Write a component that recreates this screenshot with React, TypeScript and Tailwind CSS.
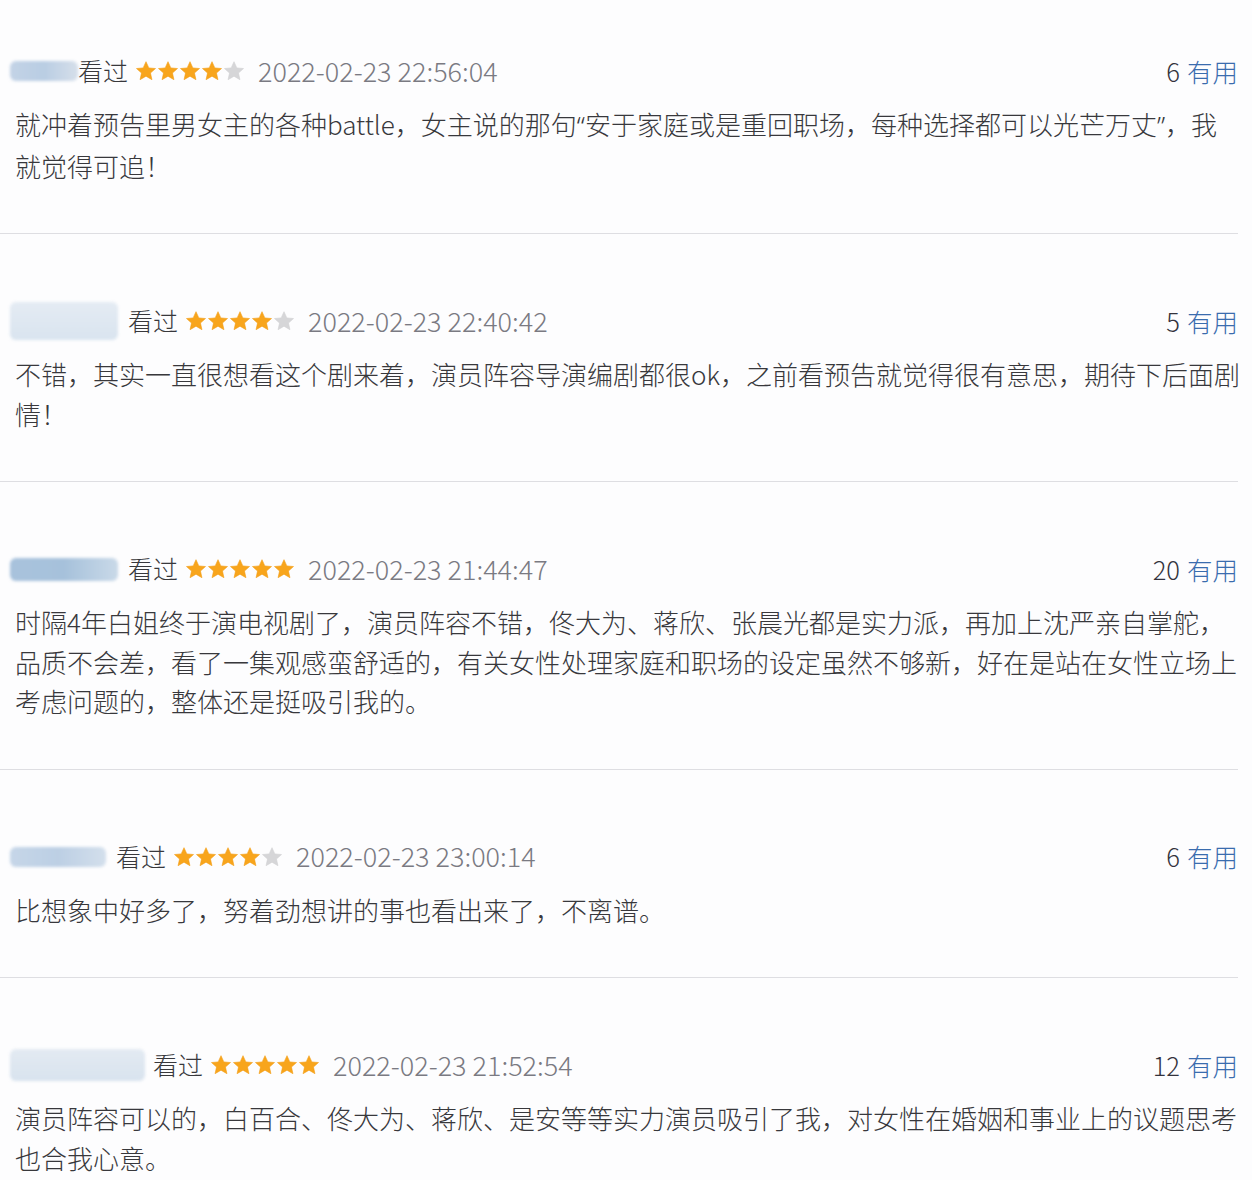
import React from "react";

type Review = {
  blob: { w: number; h: number; gap: number; cls: string };
  stars: number;
  date: string;
  useful: string;
  lines: React.ReactNode[];
};

const Q = ({ c }: { c: string }) => (
  <span style={{ fontFamily: '"Noto Sans", sans-serif' }}>{c}</span>
);

const reviews: Review[] = [
  {
    blob: { w: 68, h: 20, gap: 0, cls: "bg-gradient-to-r from-[#c3d3e6] via-[#b9cde3] to-[#d6dfea]" },
    stars: 4,
    date: "2022-02-23 22:56:04",
    useful: "6",
    lines: [
      <>
        就冲着预告里男女主的各种battle，女主说的那句<Q c="“" />安于家庭或是重回职场，每种选择都可以光芒万丈<Q c="”" />，我
      </>,
      "就觉得可追！",
    ],
  },
  {
    blob: { w: 108, h: 38, gap: 10, cls: "bg-gradient-to-b from-[#e4ebf3] to-[#d9e4ef]" },
    stars: 4,
    date: "2022-02-23 22:40:42",
    useful: "5",
    lines: [
      "不错，其实一直很想看这个剧来着，演员阵容导演编剧都很ok，之前看预告就觉得很有意思，期待下后面剧",
      "情！",
    ],
  },
  {
    blob: { w: 108, h: 23, gap: 10, cls: "bg-gradient-to-r from-[#a8c2dc] via-[#a6c1db] to-[#c9d9e8]" },
    stars: 5,
    date: "2022-02-23 21:44:47",
    useful: "20",
    lines: [
      "时隔4年白姐终于演电视剧了，演员阵容不错，佟大为、蒋欣、张晨光都是实力派，再加上沈严亲自掌舵，",
      "品质不会差，看了一集观感蛮舒适的，有关女性处理家庭和职场的设定虽然不够新，好在是站在女性立场上",
      "考虑问题的，整体还是挺吸引我的。",
    ],
  },
  {
    blob: { w: 96, h: 20, gap: 10, cls: "bg-gradient-to-r from-[#c6d6e8] via-[#bccfe4] to-[#d3dfec]" },
    stars: 4,
    date: "2022-02-23 23:00:14",
    useful: "6",
    lines: ["比想象中好多了，努着劲想讲的事也看出来了，不离谱。"],
  },
  {
    blob: { w: 135, h: 32, gap: 8, cls: "bg-gradient-to-b from-[#e3eaf2] to-[#d8e3ee]" },
    stars: 5,
    date: "2022-02-23 21:52:54",
    useful: "12",
    lines: [
      "演员阵容可以的，白百合、佟大为、蒋欣、是安等等实力演员吸引了我，对女性在婚姻和事业上的议题思考",
      "也合我心意。",
    ],
  },
];

function Star({ on }: { on: boolean }) {
  return (
    <svg width="22" height="22" viewBox="0 0 24 24" className="shrink-0">
      <polygon
        points="12,1.8 15.1,8.6 22.4,9.3 16.9,14.2 18.5,21.5 12,17.7 5.5,21.5 7.1,14.2 1.6,9.3 8.9,8.6"
        fill={on ? "#f8a51c" : "#d6d6d8"}
        stroke={on ? "#f29b0f" : "#cfcfd2"}
        strokeWidth="0.6"
        strokeLinejoin="round"
      />
    </svg>
  );
}

function ReviewBlock({ r, first }: { r: Review; first: boolean }) {
  return (
    <div className={first ? "pt-[51px]" : "pt-[67px]"}>
      <div className="flex h-[40px] items-center justify-between pl-[10px] pr-[14px]">
        <div className="flex items-center">
          <div
            className={`rounded-[6px] blur-[1.5px] ${r.blob.cls}`}
            style={{ width: r.blob.w, height: r.blob.h, marginRight: r.blob.gap }}
          />
          <span className="text-[25px] font-light text-[#38383c]">看过</span>
          <div className="ml-[7px] flex items-center">
            {[0, 1, 2, 3, 4].map((i) => (
              <Star key={i} on={i < r.stars} />
            ))}
          </div>
          <span className="ml-[13px] text-[27px] font-light text-[#7a7a82]">{r.date}</span>
        </div>
        <div className="text-[25.5px] font-light">
          <span className="text-[#33333d]">{r.useful}</span>
          <span className="ml-[7px] text-[#3a6cae]">有用</span>
        </div>
      </div>
      <div className="mt-[13px] pb-[48px] pl-[15px] text-[26px] font-light leading-[39.5px] text-[#38383c]">
        {r.lines.map((l, i) => (
          <div key={i} className="whitespace-nowrap">
            {l}
          </div>
        ))}
      </div>
    </div>
  );
}

export default function App() {
  return (
    <div
      className="h-[1180px] w-[1252px] overflow-hidden bg-[#fdfdfe]"
      style={{ fontFamily: '"Noto Sans CJK SC", "Noto Sans", sans-serif' }}
    >
      {reviews.map((r, i) => (
        <div key={i}>
          {i > 0 && <div className="h-px w-[1238px] bg-[#dedee2]" />}
          <ReviewBlock r={r} first={i === 0} />
        </div>
      ))}
    </div>
  );
}
